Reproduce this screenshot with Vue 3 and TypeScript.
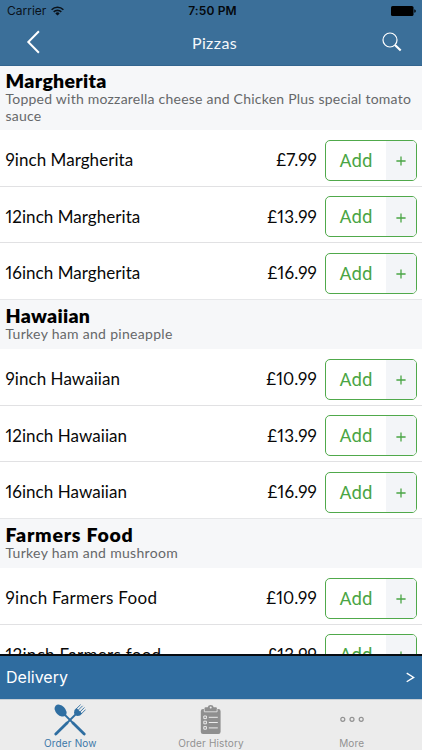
<script setup lang="ts">
interface Item { name: string; price: string }
interface Section { title: string; kind: string; description: string; items: Item[] }

const sections: Section[] = [
  {
    title: 'Margherita',
    kind: 'margherita',
    description: 'Topped with mozzarella cheese and Chicken Plus special tomato sauce',
    items: [
      { name: '9inch Margherita', price: '£7.99' },
      { name: '12inch Margherita', price: '£13.99' },
      { name: '16inch Margherita', price: '£16.99' },
    ],
  },
  {
    title: 'Hawaiian',
    kind: 'hawaiian',
    description: 'Turkey ham and pineapple',
    items: [
      { name: '9inch Hawaiian', price: '£10.99' },
      { name: '12inch Hawaiian', price: '£13.99' },
      { name: '16inch Hawaiian', price: '£16.99' },
    ],
  },
  {
    title: 'Farmers Food',
    kind: 'farmers',
    description: 'Turkey ham and mushroom',
    items: [
      { name: '9inch Farmers Food', price: '£10.99' },
      { name: '12inch Farmers food', price: '£13.99' },
    ],
  },
]
</script>

<template>
  <div class="screen">
    <header class="top">
      <div class="status">
        <div class="carrier">
          <span>Carrier</span>
          <svg class="wifi" width="13" height="10" viewBox="0 0 13 10">
            <g fill="none" stroke="#0a121a" stroke-width="1.6">
              <path d="M.6 3.7a8.4 8.4 0 0 1 11.8 0" />
              <path d="M2.7 5.9a5.4 5.4 0 0 1 7.6 0" />
            </g>
            <path d="M4.3 7.4a3.1 3.1 0 0 1 4.4 0L6.5 9.6z" fill="#0a121a" />
          </svg>
        </div>
        <span class="time">7:50 PM</span>
        <svg class="battery" width="25" height="10" viewBox="0 0 25 10">
          <rect x="0" y="0" width="22.5" height="10" rx="1.6" fill="#000" />
          <path d="M23.3 3.2q1.5.4 1.5 1.8t-1.5 1.8z" fill="#000" />
        </svg>
      </div>
      <div class="nav">
        <svg class="back" width="14" height="24" viewBox="0 0 14 24">
          <path d="M12.9 1.2 2.3 12l10.6 10.8" fill="none" stroke="#fff" stroke-width="2" />
        </svg>
        <h1>Pizzas</h1>
        <svg class="search" width="20" height="20" viewBox="0 0 20 20" fill="none" stroke="#fff">
          <circle cx="8" cy="8" r="7" stroke-width="1.2" />
          <path d="m13 13 5.7 5.5" stroke-width="2.2" />
        </svg>
      </div>
    </header>

    <main class="list">
      <section v-for="section in sections" :key="section.title">
        <div class="heading" :class="section.kind">
          <h2>{{ section.title }}</h2>
          <p>{{ section.description }}</p>
        </div>
        <div v-for="item in section.items" :key="item.name" class="row">
          <span class="name" :class="section.kind">{{ item.name }}</span>
          <span class="price">{{ item.price }}</span>
          <button class="add" type="button">
            <span class="label">Add</span>
            <span class="plus">
              <svg width="10" height="10" viewBox="0 0 10 10">
                <path d="M5 .4v9.2M.4 5h9.2" stroke="#4aa544" stroke-width="1.3" />
              </svg>
            </span>
          </button>
        </div>
      </section>
    </main>

    <div class="delivery">
      <span>Delivery</span>
      <svg width="9" height="11" viewBox="0 0 9 11">
        <path d="M.7 1.1 7.7 5.4.7 9.8" fill="none" stroke="#fff" stroke-width="1.3" />
      </svg>
    </div>

    <nav class="tabs">
      <div class="tab active">
        <svg width="32" height="32" viewBox="0 0 32 32">
          <g fill="#2f6ea1" stroke="#2f6ea1">
            <ellipse cx="6.6" cy="6.6" rx="4.8" ry="7" transform="rotate(-45 6.6 6.6)" stroke="none" />
            <path d="M10 10 20 20" fill="none" stroke-width="1.8" />
            <path d="m19 19 11.2 11" fill="none" stroke-width="2.8" stroke-linecap="round" />
            <path d="M13 19 1.800 30" fill="none" stroke-width="2.8" stroke-linecap="round" />
            <path d="m12 20 9.500-9.500" fill="none" stroke-width="1.8" />
            <path d="M20.500 6q-1.200 3 .6 4.900t5 .7l2-2-5.600-5.600z" stroke="none" />
            <path d="m22.300 4.800 4.300-4.200M24 6.400l4.600-4.600M25.800 8.100l4.600-4.600M27.200 10l4.400-4.400" fill="none" stroke-width=".9" />
          </g>
        </svg>
        <span>Order Now</span>
      </div>
      <div class="tab history">
        <svg width="22" height="32" viewBox="0 0 22 32">
          <path d="M3 5h1.500V4.200q0-1 1-1h2.200Q8.200 1 10.700 1t3 2.200h2.200q1 0 1 1V5h1.500q2.200 0 2.200 2.200v20.500q0 2.200-2.200 2.200H3Q.8 29.900.8 27.700V7.200Q.8 5 3 5z" fill="#8f8f8f" />
          <path d="M4.300 5.200v2.600h12.800V5.200" fill="none" stroke="#ececec" stroke-width=".8" />
          <circle cx="10.7" cy="3.6" r="1" fill="#ececec" />
          <g fill="none" stroke="#ececec" stroke-width="1">
            <path d="M3.8 12h2.600v2.600H3.800zM3.800 17.200h2.600v2.600H3.800zM3.800 22.600h2.600v2.600H3.800z" />
            <path d="M8.800 13.300h9M8.800 18.500h9M8.800 23.900h9" />
          </g>
        </svg>
        <span>Order History</span>
      </div>
      <div class="tab more">
        <svg width="24" height="32" viewBox="0 0 24 32" fill="none" stroke="#929292" stroke-width="1.2">
          <circle cx="2.8" cy="15.3" r="2" />
          <circle cx="12" cy="15.3" r="2" />
          <circle cx="21.2" cy="15.3" r="2" />
        </svg>
        <span>More</span>
      </div>
    </nav>
  </div>
</template>

<style>
body {
  margin: 0;
  overflow: hidden;
}
</style>

<style scoped>
.screen {
  width: 422px;
  height: 750px;
  display: flex;
  flex-direction: column;
  overflow: hidden;
  background: #fff;
  color: #080808;
  font-family: Lato, "Liberation Sans", sans-serif;
  font-variant-numeric: proportional-nums;
}
h1, h2, p { margin: 0; font-weight: 400; }
svg { display: block; flex: none; }
.top {
  flex: none;
  box-sizing: border-box;
  height: 65.5px;
  background: #3b6f99;
  border-bottom: 1px solid #33658f;
}
.status {
  height: 22px;
  display: grid;
  grid-template-columns: 1fr auto 1fr;
  align-items: center;
  padding: 0 6px 0 7px;
  font: 12px/22px Inter, sans-serif;
  color: #0a121a;
}
.carrier { display: flex; align-items: center; gap: 5px; }
.wifi { margin-top: -1px; }
.time { font-weight: 600; letter-spacing: 0.15px; padding-left: 2px; color: #04080c; }
.battery { justify-self: end; }
.nav {
  height: 40px;
  display: grid;
  grid-template-columns: 1fr auto 1fr;
  align-items: center;
  padding: 0 20px 0 26px;
}
.nav h1 { font-size: 16px; line-height: 20px; letter-spacing: 0.4px; color: #f4f8fb; padding: 2px 0 0 1px; }
.search { justify-self: end; }
.list { flex: 1; min-height: 0; overflow: hidden; }
.heading {
  box-sizing: border-box;
  height: 49.2px;
  padding: 5px 5.5px 0;
  background: #f6f7f9;
}
.heading.margherita { height: 64.7px; padding-top: 4px; }
.heading h2 { font-size: 19.5px; line-height: 21.5px; font-weight: 800; color: #000; letter-spacing: 0.28px; }
.heading.farmers h2 { letter-spacing: 0.75px; }
.heading p { font-size: 14px; line-height: 16.5px; color: #66686a; letter-spacing: 0.23px; }
.heading:not(.margherita) p { letter-spacing: 0.3px; }
.row {
  box-sizing: border-box;
  height: 56.6px;
  display: flex;
  align-items: center;
  padding: 4.6px 5px 0 5.5px;
  border-bottom: 1px solid #e1e1e3;
}
.row:last-child { border-bottom-color: #e6e7e9; }
.name { flex: 1; font-size: 17px; line-height: 22px; letter-spacing: 0.05px; }
.name.farmers { letter-spacing: 0.3px; }
.price { font-size: 17px; line-height: 22px; letter-spacing: 0.15px; margin-right: 8px; }
.add {
  box-sizing: border-box;
  width: 92px;
  height: 41px;
  display: flex;
  padding: 0;
  border: 1px solid #50a94b;
  border-radius: 5px;
  overflow: hidden;
  background: #fff;
  color: #4aa544;
  font: 400 18.5px/40px Roboto, sans-serif;
}
.label { flex: 1; text-align: center; }
.plus { width: 30px; display: flex; align-items: center; justify-content: center; background: #f3f5f8; }
.plus svg { margin-top: 2px; }
.delivery {
  flex: none;
  box-sizing: border-box;
  height: 45px;
  display: flex;
  align-items: center;
  justify-content: space-between;
  padding: 0 7px 0 6px;
  border-top: 2px solid #060b10;
  background: #2f6c9f;
  color: #fff;
  font: 16px/22px Inter, sans-serif;
}
.tabs {
  flex: none;
  box-sizing: border-box;
  height: 51.5px;
  display: grid;
  grid-template-columns: repeat(3, 1fr);
  border-top: 1px solid #c7cfd6;
  background: #ececec;
}
.tab {
  display: flex;
  flex-direction: column;
  align-items: center;
  padding-top: 4px;
  font: 10px/15px Inter, sans-serif;
  letter-spacing: 0.15px;
  color: #929292;
}
.tab.active { color: #3d78a8; }
</style>
